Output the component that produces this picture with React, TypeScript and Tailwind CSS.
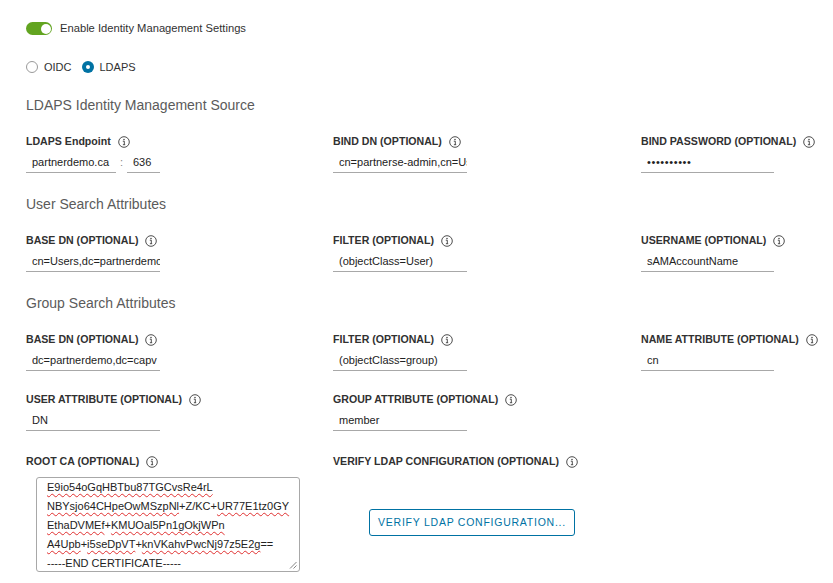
import React from "react";

const font = { fontFamily: '"Liberation Sans", Arial, sans-serif' };

function Info() {
  return (
    <svg width="12" height="12" viewBox="0 0 12 12" className="shrink-0">
      <circle cx="6" cy="6" r="5.3" fill="none" stroke="#3a3a3a" strokeWidth="0.9" />
      <circle cx="6" cy="3.4" r="0.75" fill="#3a3a3a" />
      <path d="M4.8 5.2H6.3V8.6M4.9 8.7H7.2" fill="none" stroke="#3a3a3a" strokeWidth="0.9" />
    </svg>
  );
}

function Label({ text }: { text: string }) {
  return (
    <div className="flex h-[14px] items-center gap-[7px] text-[10.6px] font-bold text-[#313131] whitespace-nowrap">
      <span>{text}</span>
      <Info />
    </div>
  );
}

function Field({ label, value, width = 134, password = false }: { label: string; value: string; width?: number; password?: boolean }) {
  return (
    <div className="flex flex-col">
      <Label text={label} />
      <input
        readOnly
        value={value}
        className={
          "mt-[3px] h-[21px] border-b border-[#a8a8a8] bg-transparent pl-[6px] text-[11px] text-[#222] outline-none " +
          (password ? "tracking-[0.6px]" : "")
        }
        style={{ width }}
      />
    </div>
  );
}

function Heading({ text }: { text: string }) {
  return <div className="h-[16px] text-[14px] leading-[16px] text-[#5b5b5b]">{text}</div>;
}

const sq = "underline decoration-wavy decoration-[#e03030] decoration-[1px] underline-offset-[2px]";

export default function App() {
  return (
    <div className="min-h-[583px] w-[833px] bg-white pl-[26px] pt-[22px]" style={font}>
      {/* toggle */}
      <div className="flex h-[13px] items-center gap-[8px]">
        <div className="flex h-[13px] w-[26px] items-center justify-end rounded-full bg-[#62a420] pr-[1.5px]">
          <div className="h-[10px] w-[10px] rounded-full bg-white" />
        </div>
        <span className="text-[11.2px] text-[#313131]">Enable Identity Management Settings</span>
      </div>

      {/* radios */}
      <div className="mt-[26px] flex h-[12px] items-center text-[11px] text-[#313131]">
        <div className="h-[12px] w-[12px] rounded-full border border-[#9a9a9a] bg-white" />
        <span className="ml-[6px]">OIDC</span>
        <div className="ml-[10px] flex h-[12px] w-[12px] items-center justify-center rounded-full bg-[#0072a3]">
          <div className="h-[4px] w-[4px] rounded-full bg-white" />
        </div>
        <span className="ml-[6px]">LDAPS</span>
      </div>

      <div className="mt-[24px]">
        <Heading text="LDAPS Identity Management Source" />
      </div>

      <div className="mt-[22px] grid grid-cols-[307px_308px_1fr]">
        <div className="flex flex-col">
          <Label text="LDAPS Endpoint" />
          <div className="mt-[3px] flex items-end">
            <input
              readOnly
              value="partnerdemo.ca"
              className="h-[21px] w-[90px] border-b border-[#a8a8a8] bg-transparent pl-[6px] text-[11px] text-[#222] outline-none"
            />
            <span className="flex h-[21px] w-[11px] items-center justify-center text-[11px] text-[#888]">:</span>
            <input
              readOnly
              value="636"
              className="h-[21px] w-[33px] border-b border-[#a8a8a8] bg-transparent pl-[6px] text-[11px] text-[#222] outline-none"
            />
          </div>
        </div>
        <Field label="BIND DN (OPTIONAL)" value="cn=partnerse-admin,cn=Users,dc=partnerdemo,dc=ca" />
        <Field label="BIND PASSWORD (OPTIONAL)" value="••••••••••" width={133} password />
      </div>

      <div className="mt-[23px]">
        <Heading text="User Search Attributes" />
      </div>

      <div className="mt-[22px] grid grid-cols-[307px_308px_1fr]">
        <Field label="BASE DN (OPTIONAL)" value="cn=Users,dc=partnerdemo,dc=capv" />
        <Field label="FILTER (OPTIONAL)" value="(objectClass=User)" />
        <Field label="USERNAME (OPTIONAL)" value="sAMAccountName" width={133} />
      </div>

      <div className="mt-[23px]">
        <Heading text="Group Search Attributes" />
      </div>

      <div className="mt-[22px] grid grid-cols-[307px_308px_1fr]">
        <Field label="BASE DN (OPTIONAL)" value="dc=partnerdemo,dc=capv" />
        <Field label="FILTER (OPTIONAL)" value="(objectClass=group)" />
        <Field label="NAME ATTRIBUTE (OPTIONAL)" value="cn" width={133} />
      </div>

      <div className="mt-[22px] grid grid-cols-[307px_308px_1fr]">
        <Field label="USER ATTRIBUTE (OPTIONAL)" value="DN" />
        <Field label="GROUP ATTRIBUTE (OPTIONAL)" value="member" />
        <div />
      </div>

      <div className="mt-[24px] grid grid-cols-[307px_308px_1fr]">
        <div className="flex flex-col">
          <Label text="ROOT CA (OPTIONAL)" />
          <div className="relative ml-[10px] mt-[8px] h-[95px] w-[264px] overflow-hidden rounded-[3px] border border-[#a8a8a8] bg-white pl-[10px] pt-[0px] text-[11px] leading-[19px] text-[#222] whitespace-nowrap">
            <div><span className={sq}>E9io54oGqHBTbu87TGCvsRe4rL</span></div>
            <div>
              <span className={sq}>NBYsjo64CHpeOwMSzpNl</span>+Z/KC+<span className={sq}>UR77E1tz0GY</span>
            </div>
            <div>
              <span className={sq}>EthaDVMEf</span>+<span className={sq}>KMUOal5Pn1gOkjWPn</span>
            </div>
            <div>
              <span className={sq}>A4Upb</span>+<span className={sq}>i5seDpVT</span>+<span className={sq}>knVKahvPwcNj97z5E2g</span>==
            </div>
            <div>-----END CERTIFICATE-----</div>
            <svg className="absolute bottom-[2px] right-[2px]" width="8" height="8" viewBox="0 0 8 8">
              <path d="M7.5 1L1 7.5M7.5 4.5L4.5 7.5" stroke="#777" strokeWidth="0.9" />
            </svg>
          </div>
        </div>
        <div className="flex flex-col">
          <Label text="VERIFY LDAP CONFIGURATION (OPTIONAL)" />
          <button className="ml-[36px] mt-[40px] flex h-[27px] w-[206px] items-center justify-center rounded-[3px] border border-[#0072a3] bg-white text-[10.5px] font-normal tracking-[0.75px] text-[#0072a3]">
            VERIFY LDAP CONFIGURATION...
          </button>
        </div>
        <div />
      </div>
    </div>
  );
}
